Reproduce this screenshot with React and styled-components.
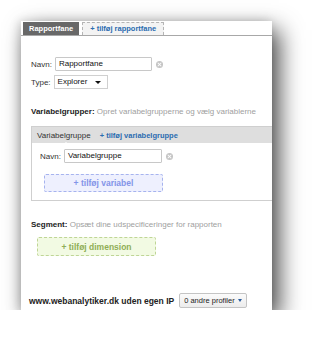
import styled, { createGlobalStyle } from "styled-components";

const Global = createGlobalStyle`
  body {
    margin: 0;
    background: #ffffff;
    font-family: "Liberation Sans", Arial, sans-serif;
  }
`;

export default function App() {
  return (
    <Page>
      <Global />
      <Panel>
        <TabBar>
          <Tab $active>Rapportfane</Tab>
          <Tab>+ tilføj rapportfane</Tab>
        </TabBar>

        <Body>
          <Fields>
            <Row>
              <Label>Navn:</Label>
              <TextInput $width={97}>Rapportfane</TextInput>
              <Clear />
            </Row>
            <Row>
              <Label>Type:</Label>
              <Select>
                Explorer
                <Caret />
              </Select>
            </Row>
          </Fields>

          <Heading>
            <b>Variabelgrupper:</b> <Hint>Opret variabelgrupperne og vælg variablerne</Hint>
          </Heading>

          <GroupBox>
            <GroupHeader>
              <GroupTab>Variabelgruppe</GroupTab>
              <AddLink>+ tilføj variabelgruppe</AddLink>
            </GroupHeader>
            <GroupBody>
              <Row>
                <Label>Navn:</Label>
                <TextInput $width={98}>Variabelgruppe</TextInput>
                <Clear />
              </Row>
              <DashedButton $tone="blue">+ tilføj variabel</DashedButton>
            </GroupBody>
          </GroupBox>

          <Heading $segment>
            <b>Segment:</b> <Hint>Opsæt dine udspecificeringer for rapporten</Hint>
          </Heading>
          <DimensionWrap>
            <DashedButton $tone="green">+ tilføj dimension</DashedButton>
          </DimensionWrap>
        </Body>

        <Footer>
          <Site>www.webanalytiker.dk uden egen IP</Site>
          <ProfileButton>
            0 andre profiler
            <SmallCaret />
          </ProfileButton>
        </Footer>
      </Panel>
    </Page>
  );
}

const Page = styled.div`
  padding: 21px 0 0 21px;
`;

const Panel = styled.div`
  width: 251px;
  height: 289px;
  background: #ffffff;
  box-shadow: 7px 9px 22px rgba(0, 0, 0, 0.72), -2px 0 9px rgba(0, 0, 0, 0.15);
  display: flex;
  flex-direction: column;
`;

const TabBar = styled.div`
  height: 15px;
  box-sizing: border-box;
  padding-left: 2px;
  display: flex;
  align-items: flex-end;
  gap: 3px;
  border-bottom: 1px solid #a8a8a8;
`;

const Tab = styled.div`
  height: 13px;
  box-sizing: border-box;
  padding: 0 ${(p) => (p.$active ? "5px" : "7px")};
  font-size: 7.5px;
  font-weight: bold;
  line-height: 12px;
  white-space: nowrap;
  color: ${(p) => (p.$active ? "#ffffff" : "#2b6cb0")};
  background: ${(p) => (p.$active ? "#686868" : "#f3f3f3")};
  border: 1px ${(p) => (p.$active ? "solid #686868" : "dashed #b5b5b5")};
  border-bottom: none;
`;

const Body = styled.div`
  padding: 21px 0 0 10px;
  flex: 1;
`;

const Fields = styled.div`
  display: flex;
  flex-direction: column;
  gap: 4px;
`;

const Row = styled.div`
  display: flex;
  align-items: center;
  font-size: 8px;
  color: #333;
`;

const Label = styled.span`
  margin-right: 3px;
`;

const TextInput = styled.div`
  width: ${(p) => p.$width}px;
  height: 14px;
  box-sizing: border-box;
  border: 1px solid #c8c8c8;
  border-radius: 1px;
  padding: 0 3px;
  line-height: 12px;
  color: #111;
`;

const Clear = styled.span`
  width: 7px;
  height: 7px;
  margin-left: 4px;
  border-radius: 50%;
  background: #c4c4c4;
  position: relative;
  &::before,
  &::after {
    content: "";
    position: absolute;
    left: 1px;
    top: 3px;
    width: 5px;
    height: 1px;
    background: #fff;
    transform: rotate(45deg);
  }
  &::after {
    transform: rotate(-45deg);
  }
`;

const Select = styled.div`
  width: 54px;
  height: 14px;
  box-sizing: border-box;
  border: 1px solid #d0d0d0;
  padding: 0 3px;
  line-height: 12px;
  display: flex;
  align-items: center;
  justify-content: space-between;
  color: #111;
`;

const Caret = styled.span`
  border-left: 3px solid transparent;
  border-right: 3px solid transparent;
  border-top: 3px solid #111;
  margin-right: 3px;
`;

const Heading = styled.div`
  margin-top: ${(p) => (p.$segment ? "19px" : "18px")};
  font-size: 8px;
  color: #222;
  line-height: 10px;
  white-space: nowrap;
  b {
    font-weight: bold;
  }
`;

const Hint = styled.span`
  color: #a0a0a0;
`;

const GroupBox = styled.div`
  margin-top: 9px;
  border: 1px solid #cfcfcf;
  border-right: none;
  height: 75px;
  box-sizing: border-box;
`;

const GroupHeader = styled.div`
  height: 16px;
  background: #dedede;
  display: flex;
  align-items: center;
  gap: 9px;
  padding-left: 5px;
  font-size: 8px;
`;

const GroupTab = styled.span`
  color: #333;
  position: relative;
  &::after {
    content: "";
    position: absolute;
    left: 26px;
    bottom: -5px;
    border-left: 3px solid transparent;
    border-right: 3px solid transparent;
    border-bottom: 3px solid #ffffff;
  }
`;

const AddLink = styled.span`
  color: #2b6cb0;
  font-weight: bold;
  font-size: 7.5px;
`;

const GroupBody = styled.div`
  padding: 6px 0 0 8px;
  display: flex;
  flex-direction: column;
  gap: 11px;
`;

const tones = {
  blue: { bg: "#eef0fe", border: "#a6b3ee", text: "#8394e8", w: 119, h: 18, ml: 4 },
  green: { bg: "#f2fae3", border: "#bfd596", text: "#8fae56", w: 119, h: 19, ml: 0 },
};

const DashedButton = styled.div`
  width: ${(p) => tones[p.$tone].w}px;
  height: ${(p) => tones[p.$tone].h}px;
  margin-left: ${(p) => tones[p.$tone].ml}px;
  box-sizing: border-box;
  background: ${(p) => tones[p.$tone].bg};
  border: 1px dashed ${(p) => tones[p.$tone].border};
  border-radius: 2px;
  color: ${(p) => tones[p.$tone].text};
  font-size: 8.5px;
  font-weight: bold;
  display: flex;
  align-items: center;
  justify-content: center;
`;

const DimensionWrap = styled.div`
  margin-top: 7px;
  padding-left: 6px;
`;

const Footer = styled.div`
  padding: 0 0 2px 8px;
  display: flex;
  align-items: center;
  gap: 5px;
`;

const Site = styled.span`
  font-size: 8.5px;
  font-weight: bold;
  color: #222;
  white-space: nowrap;
`;

const ProfileButton = styled.div`
  height: 15px;
  box-sizing: border-box;
  border: 1px solid #c4c4c4;
  border-radius: 2px;
  background: linear-gradient(#fbfbfb, #ececec);
  font-size: 7.5px;
  color: #222;
  white-space: nowrap;
  display: flex;
  align-items: center;
  padding: 0 4px;
  gap: 3px;
`;

const SmallCaret = styled.span`
  border-left: 2.5px solid transparent;
  border-right: 2.5px solid transparent;
  border-top: 3px solid #2b5ea0;
`;
